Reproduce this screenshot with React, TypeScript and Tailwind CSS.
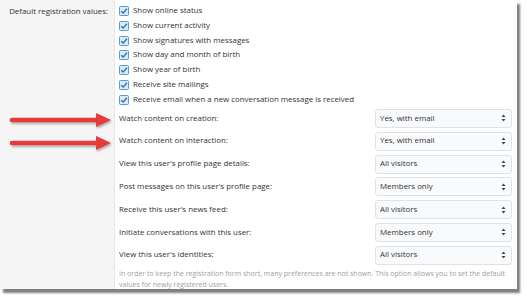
import React from 'react';

const checks = [
  'Show online status',
  'Show current activity',
  'Show signatures with messages',
  'Show day and month of birth',
  'Show year of birth',
  'Receive site mailings',
  'Receive email when a new conversation message is received',
];

const selects = [
  { label: 'Watch content on creation:', value: 'Yes, with email' },
  { label: 'Watch content on interaction:', value: 'Yes, with email' },
  { label: "View this user's profile page details:", value: 'All visitors' },
  { label: "Post messages on this user's profile page:", value: 'Members only' },
  { label: "Receive this user's news feed:", value: 'All visitors' },
  { label: 'Initiate conversations with this user:', value: 'Members only' },
  { label: "View this user's identities:", value: 'All visitors' },
];

function CheckBox() {
  return (
    <svg width="10" height="10" viewBox="0 0 10 10" className="shrink-0">
      <rect x="0.5" y="0.5" width="9" height="9" rx="1" fill="#dbeaf8" stroke="#5b9bd5" />
      <path d="M2.2 5.2 L4.2 7.1 L7.9 2.8" fill="none" stroke="#2f6fb5" strokeWidth="1.4" />
    </svg>
  );
}

function Arrow() {
  return (
    <svg width="112" height="20" viewBox="0 0 112 20">
      <defs>
        <filter id="sh" x="-10%" y="-50%" width="120%" height="200%">
          <feDropShadow dx="1" dy="1.5" stdDeviation="1" floodColor="#000" floodOpacity="0.35" />
        </filter>
      </defs>
      <g filter="url(#sh)">
        <line x1="3" y1="8" x2="92" y2="8" stroke="#e53a3a" strokeWidth="4.5" strokeLinecap="round" />
        <path d="M87 1 L102 8 L87 15 Z" fill="#e53a3a" />
      </g>
    </svg>
  );
}

function UpDown() {
  return (
    <svg width="5" height="8" viewBox="0 0 5 8">
      <path d="M2.5 0.5 L4.5 3 L0.5 3 Z" fill="#444" />
      <path d="M2.5 7.5 L4.5 5 L0.5 5 Z" fill="#444" />
    </svg>
  );
}

export default function App() {
  return (
    <div className="w-[527px] h-[300px] bg-white relative" style={{ fontFamily: '"Open Sans", "Noto Sans", sans-serif' }}>
      <div className="w-[517px] h-[289px] flex bg-white shadow-[3px_4px_2px_rgba(0,0,0,0.5)] overflow-hidden">
        {/* left label column */}
        <div className="w-[115px] bg-[#f5f5f5] border-r border-[#e6e6e6] pt-[5px] pr-[6px] text-right text-[7.9px] leading-[12px] text-[#333]">
          Default registration values:
        </div>

        {/* right column */}
        <div className="flex-1 pl-[4px] pr-[5px] pt-[3.6px] text-[7.9px] text-[#333]">
          {checks.map((c) => (
            <div key={c} className="h-[14.8px] flex items-center gap-[4px]">
              <CheckBox />
              <span>{c}</span>
            </div>
          ))}

          <div className="mt-[1.8px] flex flex-col gap-[3.8px]">
            {selects.map((s) => (
              <div key={s.label} className="h-[19px] flex items-center">
                <span className="flex-1">{s.label}</span>
                <div className="w-[137px] h-[19px] flex items-center justify-between pl-[4px] pr-[5px] bg-[#f8fafc] border border-[#dde3e9] rounded-[3px]">
                  <span>{s.value}</span>
                  <UpDown />
                </div>
              </div>
            ))}
          </div>

          <div className="mt-[3px] pr-[6px] text-[7px] leading-[11px] text-[#a0a0a0]">
            In order to keep the registration form short, many preferences are not shown. This option allows you to set the default values for newly registered users.
          </div>
        </div>
      </div>

      {/* annotation arrows */}
      <div className="absolute left-[9px] top-[112px]">
        <Arrow />
      </div>
      <div className="absolute left-[9px] top-[135px]">
        <Arrow />
      </div>
    </div>
  );
}
